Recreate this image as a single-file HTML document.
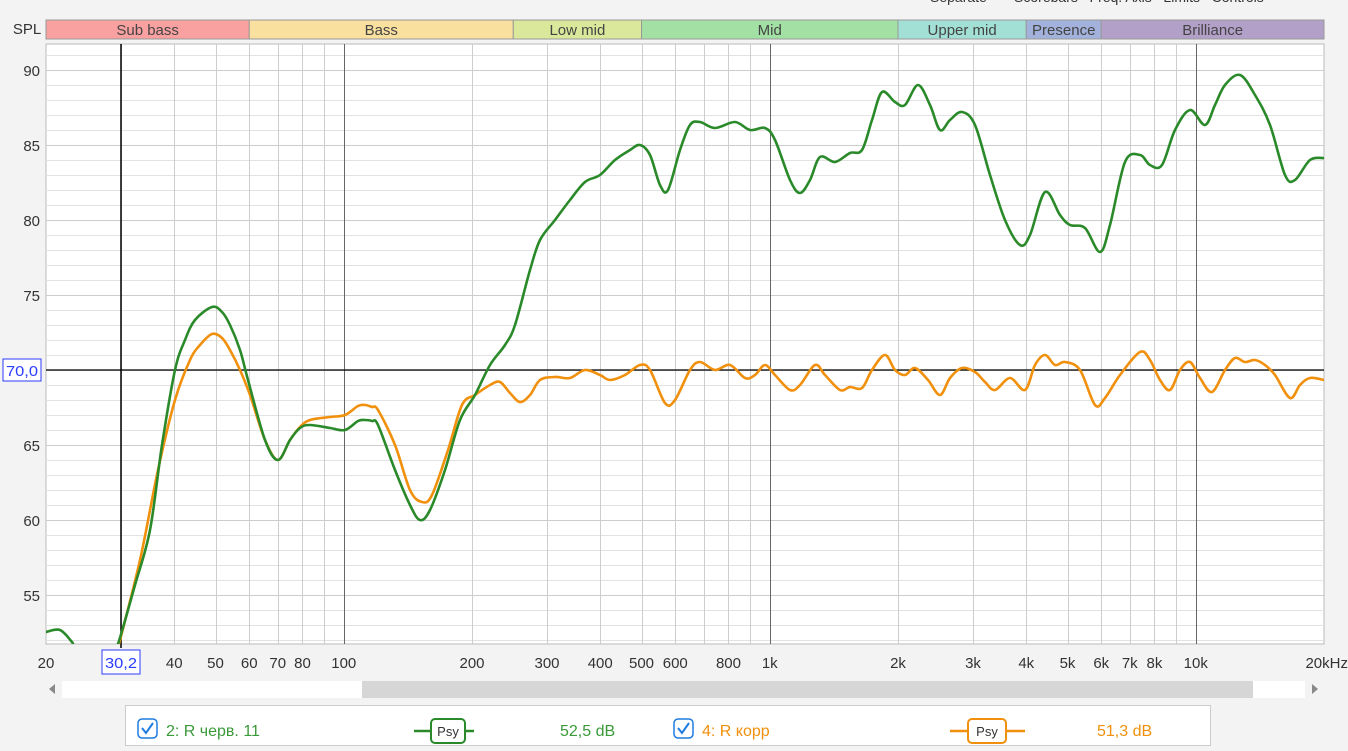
<!DOCTYPE html>
<html><head><meta charset="utf-8"><style>
body{margin:0;width:1348px;height:751px;background:#f3f3f3;font-family:"Liberation Sans",sans-serif;overflow:hidden;position:relative}
.a{position:absolute}
</style></head><body>
<div class="a" style="left:930px;top:-11px;font-size:14px;color:#333;white-space:nowrap">Separate &nbsp;&nbsp;&nbsp;&nbsp;&nbsp; Scorebars &nbsp; Freq. Axis &nbsp; Limits &nbsp; Controls</div>
<svg class="a" style="left:0;top:0" width="1348" height="751" id="s">
<rect x="46" y="44" width="1278" height="600" fill="#fff" stroke="#bbb"/>
<g id="grid"></g>
<g id="bands"></g>
<line x1="46" y1="370" x2="1324" y2="370" stroke="#000" stroke-width="1.2"/>
<line x1="121" y1="44" x2="121" y2="648" stroke="#000" stroke-width="1.5"/>
<defs><clipPath id="c"><rect x="46" y="44" width="1278" height="600"/></clipPath></defs>
<g clip-path="url(#c)" fill="none" stroke-width="2.6" stroke-linejoin="round" stroke-linecap="round">
<path id="po" stroke="#f0900c"/>
<path id="pg" stroke="#2a8a2a"/>
</g>
<g id="tx" font-family="Liberation Sans" font-size="15" fill="#333"></g>
<rect x="3" y="359" width="38" height="22" fill="#fff" stroke="#2b3dff"/>
<text x="22" y="376" text-anchor="middle" font-size="15" fill="#2b3dff" font-family="Liberation Sans" textLength="32" lengthAdjust="spacingAndGlyphs">70,0</text>
<rect x="102" y="650" width="38" height="24" fill="#fff" stroke="#2b3dff"/>
<text x="121" y="668" text-anchor="middle" font-size="15" fill="#2b3dff" font-family="Liberation Sans" textLength="32" lengthAdjust="spacingAndGlyphs">30,2</text>
<text x="27" y="34" text-anchor="middle" font-size="15" fill="#333" font-family="Liberation Sans">SPL</text>
<rect x="62" y="681" width="1243" height="17" fill="#fff"/>
<rect x="362" y="681" width="891" height="17" fill="#d6d6d6"/>
<polygon points="55,684 55,694 49,689" fill="#888"/>
<polygon points="1312,684 1312,694 1318,689" fill="#888"/>
<rect x="125.5" y="705.5" width="1085" height="40" fill="#fff" stroke="#ccc"/>
<rect x="138" y="719" width="19" height="19" rx="4" fill="#fff" stroke="#1e7be0" stroke-width="1.5"/>
<path d="M142 728 l4 5 l7 -10" fill="none" stroke="#1e7be0" stroke-width="2"/>
<text x="166" y="736" font-size="16" fill="#3a9a3a" font-family="Liberation Sans">2: R черв. 11</text>
<line x1="414" y1="731" x2="474" y2="731" stroke="#2a8a2a" stroke-width="2.5"/>
<rect x="431" y="719" width="34" height="24" rx="4" fill="#fff" stroke="#2a8a2a" stroke-width="2"/>
<text x="448" y="736" text-anchor="middle" font-size="13" fill="#333" font-family="Liberation Sans">Psy</text>
<text x="560" y="736" font-size="16" fill="#3a9a3a" font-family="Liberation Sans">52,5 dB</text>
<rect x="674" y="719" width="19" height="19" rx="4" fill="#fff" stroke="#1e7be0" stroke-width="1.5"/>
<path d="M678 728 l4 5 l7 -10" fill="none" stroke="#1e7be0" stroke-width="2"/>
<text x="702" y="736" font-size="16" fill="#f0900c" font-family="Liberation Sans">4: R корр</text>
<line x1="950" y1="731" x2="1025" y2="731" stroke="#f0900c" stroke-width="2.5"/>
<rect x="968" y="719" width="38" height="24" rx="4" fill="#fff" stroke="#f0900c" stroke-width="2"/>
<text x="987" y="736" text-anchor="middle" font-size="13" fill="#333" font-family="Liberation Sans">Psy</text>
<text x="1097" y="736" font-size="16" fill="#f0900c" font-family="Liberation Sans">51,3 dB</text>
</svg>
<script>
var NS="http://www.w3.org/2000/svg";
function X(f){return 46+1278*Math.log10(f/20)/3;}
function el(p,t,a,txt){var e=document.createElementNS(NS,t);for(var k in a)e.setAttribute(k,a[k]);if(txt)e.textContent=txt;document.getElementById(p).appendChild(e);}
for(var y=55;y<644;y+=15){var mj=((y-70)%75==0);el("grid","line",{x1:46,x2:1324,y1:y+.5,y2:y+.5,stroke:mj?"#cccccc":"#e2e2e2"});}
var fs=[];[10,100,1000,10000].forEach(function(d){for(var i=1;i<10;i++){var f=d*i;if(f>20&&f<20000)fs.push(f);}});
fs.forEach(function(f){var x=Math.round(X(f))+.5;var maj=(f==100||f==1000||f==10000);el("grid","line",{x1:x,x2:x,y1:44,y2:644,stroke:maj?"#666":"#cdcdcd"});});
var b=[["Sub bass",20,60,"#f9a0a0"],["Bass",60,250,"#f9e09e"],["Low mid",250,500,"#d9e89a"],["Mid",500,2000,"#a2e0a4"],["Upper mid",2000,4000,"#a2e0d6"],["Presence",4000,6000,"#a2b2dc"],["Brilliance",6000,20000,"#b3a0c8"]];
b.forEach(function(q){var x1=X(q[1]),x2=X(q[2]);el("bands","rect",{x:x1,y:20,width:x2-x1,height:19,fill:q[3],stroke:"#999"});el("bands","text",{x:(x1+x2)/2,y:35,"text-anchor":"middle","font-size":15,fill:"#444","font-family":"Liberation Sans"},q[0]);});
[90,85,80,75,65,60,55].forEach(function(v){el("tx","text",{x:40,y:370-15*(v-70)+6,"text-anchor":"end"},""+v);});
var L=[[20,"20"],[40,"40"],[50,"50"],[60,"60"],[70,"70"],[80,"80"],[100,"100"],[200,"200"],[300,"300"],[400,"400"],[500,"500"],[600,"600"],[800,"800"],[1000,"1k"],[2000,"2k"],[3000,"3k"],[4000,"4k"],[5000,"5k"],[6000,"6k"],[7000,"7k"],[8000,"8k"],[10000,"10k"]];
L.forEach(function(q){el("tx","text",{x:X(q[0]),y:668,"text-anchor":"middle"},q[1]);});
el("tx","text",{x:1348,y:668,"text-anchor":"end"},"20kHz");
function smooth(s){var p=s.trim().split(/\s+/).map(function(t){return t.split(",").map(Number);});var d="M"+p[0][0]+","+p[0][1];for(var i=0;i<p.length-1;i++){var p0=p[i-1]||p[i],p1=p[i],p2=p[i+1],p3=p[i+2]||p2;var c1x=p1[0]+(p2[0]-p0[0])/6,c1y=p1[1]+(p2[1]-p0[1])/6,c2x=p2[0]-(p3[0]-p1[0])/6,c2y=p2[1]-(p3[1]-p1[1])/6;d+=" C"+c1x+","+c1y+" "+c2x+","+c2y+" "+p2[0]+","+p2[1];}return d;}
var O="118,648 140,560 158,470 175,400 190,360 200,345 212,334 222,338 230,350 240,370 250,395 265,440 278,460 290,440 300,427 310,420 330,417 345,415 358,406 365,405 372,407 378,410 395,445 410,490 422,502 432,495 448,450 462,405 475,395 490,385 500,382 510,393 520,402 530,395 540,380 555,377 570,378 585,370 600,375 610,380 625,375 640,365 650,370 665,403 675,400 690,370 700,362 715,370 730,365 745,378 755,375 765,365 775,375 790,390 800,385 815,365 825,375 840,390 850,387 862,388 872,370 885,355 895,370 905,375 915,368 928,380 940,395 950,378 962,368 975,372 985,382 995,390 1010,378 1025,390 1035,365 1045,355 1055,365 1065,362 1080,370 1095,405 1105,398 1120,375 1140,352 1150,360 1160,380 1170,390 1180,370 1190,362 1200,378 1212,392 1225,370 1235,358 1245,362 1255,360 1265,365 1275,375 1290,398 1300,385 1310,378 1324,380";
var G="46,632 60,630 72,642 78,650 112,652 118,644 135,585 150,530 162,445 175,370 185,340 195,320 212,307 222,312 230,325 240,350 248,380 265,440 278,460 290,440 300,428 310,425 330,428 345,430 358,421 365,420 372,421 378,425 395,470 410,505 420,520 430,510 445,470 460,420 475,395 490,365 505,345 515,325 530,270 540,240 555,220 570,200 585,182 600,175 615,160 630,150 640,145 650,155 660,185 668,190 680,150 690,125 700,122 715,128 735,122 750,130 765,128 775,140 790,180 800,193 810,180 820,157 835,162 850,153 862,150 872,120 882,92 895,102 905,105 918,85 930,105 940,130 950,120 962,112 975,125 990,175 1005,220 1020,245 1030,235 1045,192 1060,215 1070,225 1085,228 1100,252 1110,225 1125,162 1140,155 1150,165 1162,165 1175,130 1190,110 1205,125 1215,105 1225,85 1240,75 1255,95 1270,125 1285,175 1295,180 1310,160 1324,158";
document.getElementById("po").setAttribute("d",smooth(O));
document.getElementById("pg").setAttribute("d",smooth(G));
</script>
</body></html>
